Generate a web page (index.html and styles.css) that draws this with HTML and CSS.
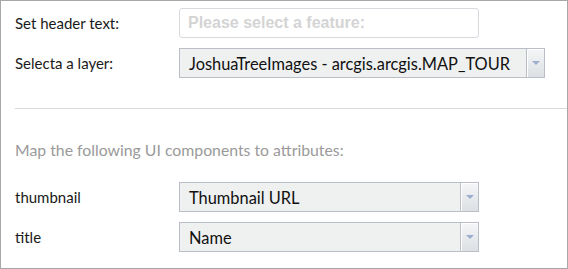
FILE: index.html
```html
<!DOCTYPE html>
<html lang="en">
<head>
    <meta charset="UTF-8">
    <title>Map Tour settings</title>
    <link rel="stylesheet" href="styles.css">
</head>
<body>
    <div class="panel">
        <div class="form-row">
            <label class="label">Set header text:</label>
            <input class="text-input" type="text" placeholder="Please select a feature:">
        </div>
        <div class="form-row">
            <label class="label">Selecta a layer:</label>
            <div class="select wide">
                <span class="select-value">JoshuaTreeImages - arcgis.arcgis.MAP_TOUR</span>
                <span class="select-arrow"></span>
            </div>
        </div>

        <hr class="divider">

        <p class="hint">Map the following UI components to attributes:</p>

        <div class="form-row">
            <label class="label">thumbnail</label>
            <div class="select">
                <span class="select-value">Thumbnail URL</span>
                <span class="select-arrow"></span>
            </div>
        </div>
        <div class="form-row">
            <label class="label">title</label>
            <div class="select">
                <span class="select-value">Name</span>
                <span class="select-arrow"></span>
            </div>
        </div>
    </div>
</body>
</html>
```

FILE: styles.css
```css
body {
    margin: 0;
    padding: 0;
    background: #fff;
    font-family: 'Lato', 'Liberation Sans', sans-serif;
}

.panel {
    box-sizing: border-box;
    width: 568px;
    height: 269px;
    border: 1px solid #a8a8a8;
    padding: 7px 0 0 14px;
    display: flex;
    flex-direction: column;
    gap: 10px;
}

.form-row {
    display: grid;
    grid-template-columns: 164px auto;
    align-items: center;
    height: 30px;
}

.label {
    font-size: 15px;
    color: #1a1a1a;
    padding-bottom: 1px;
}

.text-input {
    box-sizing: border-box;
    width: 300px;
    height: 30px;
    border: 1px solid #d6d9dd;
    border-radius: 3px;
    padding: 0 8px;
    font-family: 'Liberation Sans', sans-serif;
    font-size: 16px;
    outline: none;
}

.text-input::placeholder {
    color: #d4d4d4;
    font-weight: bold;
}

.select {
    box-sizing: border-box;
    width: 300px;
    height: 30px;
    border: 1px solid #b9bec7;
    background: #eff0f0;
    display: flex;
    align-items: center;
}

.select.wide {
    width: 366px;
}

.select-value {
    flex: 1;
    padding-left: 9px;
    font-size: 16.4px;
    color: #111;
    white-space: nowrap;
}

.select-arrow {
    box-sizing: border-box;
    width: 18px;
    height: 100%;
    border-left: 1px solid #b9bec7;
    box-shadow: inset 1px 1px 0 #fff;
    background: linear-gradient(#f5f6f7, #dcdfe3);
    display: flex;
    align-items: center;
    justify-content: center;
}

.select-arrow::after {
    content: "";
    border-left: 4px solid transparent;
    border-right: 4px solid transparent;
    border-top: 4px solid #9caed0;
}

.divider {
    border: none;
    border-top: 1px solid #dadada;
    margin: 20px 0 0 0;
    height: 0;
}

.hint {
    margin: 21px 0 13px 0;
    font-size: 15.8px;
    color: #9a9a9a;
}
```
